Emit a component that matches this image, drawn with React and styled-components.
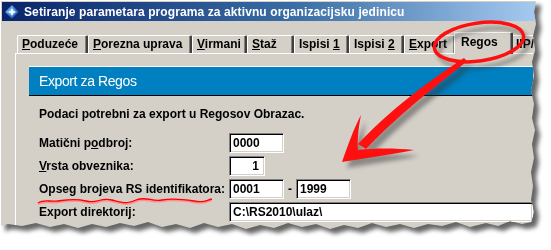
import React from "react";
import styled, { createGlobalStyle } from "styled-components";

const GlobalStyle = createGlobalStyle`
  html, body {
    margin: 0;
    padding: 0;
    background: #ffffff;
  }
`;

const Page = styled.div`
  position: relative;
  width: 551px;
  height: 250px;
  overflow: hidden;
  background: #ffffff;
  font-family: "Liberation Sans", Arial, sans-serif;
`;

const ShadowWrap = styled.div`
  filter: drop-shadow(5px 5px 2px rgba(0, 0, 0, 0.6));
`;

// torn paper edge on the right and bottom
const Dialog = styled.div`
  width: 537px;
  height: 232px;
  box-sizing: border-box;
  background: #d4d0c8;
  border-top: 1px solid #ffffff;
  border-left: 1px solid #ffffff;
  padding: 1px 0 0 1px;
  clip-path: polygon(
    0 0, 536px 0, 534px 12px, 536px 24px, 533px 36px, 535px 50px, 532px 62px,
    534px 76px, 531px 90px, 534px 104px, 532px 118px, 535px 130px, 532px 144px,
    534px 158px, 531px 172px, 533px 186px, 531px 200px, 534px 212px, 531px 222px,
    522px 224px, 510px 221px, 498px 226px, 486px 223px, 470px 227px, 456px 222px,
    442px 226px, 428px 224px, 414px 228px, 400px 224px, 386px 227px, 372px 223px,
    358px 228px, 344px 225px, 330px 229px, 316px 224px, 302px 227px, 288px 223px,
    274px 228px, 260px 225px, 246px 229px, 232px 224px, 218px 227px, 204px 223px,
    190px 228px, 176px 224px, 162px 227px, 148px 222px, 134px 226px, 120px 223px,
    106px 227px, 92px 224px, 78px 228px, 64px 224px, 50px 227px, 36px 223px,
    22px 226px, 8px 224px, 0 226px
  );
`;

const TitleBar = styled.div`
  height: 19px;
  display: flex;
  align-items: center;
  gap: 4px;
  padding-left: 2px;
  background: linear-gradient(to right, #0a246a 0%, #3a6ea5 55%, #a6caf0 100%);
`;

const TitleText = styled.span`
  color: #ffffff;
  font-weight: bold;
  font-size: 12px;
  letter-spacing: 0.1px;
  white-space: nowrap;
`;

const Body = styled.div`
  padding: 10px 4px 0 13px;
`;

const TabStrip = styled.div`
  display: flex;
  align-items: flex-end;
  height: 22px;
  padding-left: 2px;
`;

const Tab = styled.div`
  position: relative;
  z-index: ${(p) => (p.$active ? 2 : 1)};
  box-sizing: border-box;
  flex: none;
  width: ${(p) => p.$width}px;
  height: ${(p) => (p.$active ? 22 : 18)}px;
  margin: 0 ${(p) => (p.$active ? -2 : 0)}px ${(p) => (p.$active ? -1 : 0)}px;
  padding: ${(p) => (p.$active ? "2px 0 0 6px" : "1px 0 0 4px")};
  background: #d4d0c8;
  border-top: 1px solid #ffffff;
  border-left: 1px solid #ffffff;
  border-right: 2px solid #404040;
  border-top-left-radius: 2px;
  border-top-right-radius: 2px;
  box-shadow: inset -1px 0 0 #808080;
  font-size: 12px;
  font-weight: bold;
  color: #000000;
  white-space: nowrap;
  overflow: hidden;
  line-height: 15px;
`;

const Panel = styled.div`
  border-top: 1px solid #ffffff;
  border-left: 1px solid #ffffff;
  padding: 12px 0 0 13px;
  height: 200px;
`;

const Header = styled.div`
  height: 30px;
  box-sizing: border-box;
  display: flex;
  align-items: center;
  padding-left: 10px;
  background: #0080c0;
  border-top: 1px solid #ffffff;
  border-bottom: 1px solid #000000;
  color: #ffffff;
  font-size: 14px;
  letter-spacing: -0.4px;
`;

const Description = styled.div`
  margin: 11px 0 0 10px;
  height: 15px;
  font-size: 12px;
  font-weight: bold;
  line-height: 15px;
`;

const Form = styled.div`
  display: grid;
  grid-template-columns: 190px auto;
  grid-auto-rows: 21px;
  row-gap: 2px;
  align-items: center;
  margin: 10px 0 0 10px;
`;

const Label = styled.div`
  font-size: 12px;
  font-weight: bold;
  white-space: nowrap;
`;

const FieldRow = styled.div`
  display: flex;
  align-items: center;
  gap: 4px;
`;

const Field = styled.div`
  box-sizing: border-box;
  width: ${(p) => p.$width}px;
  height: 20px;
  padding: 0 ${(p) => (p.$right ? "5px" : "0")} 0 3px;
  display: flex;
  align-items: center;
  justify-content: ${(p) => (p.$right ? "flex-end" : "flex-start")};
  background: #ffffff;
  border-top: 1px solid #808080;
  border-left: 1px solid #808080;
  border-bottom: 1px solid #ffffff;
  border-right: 1px solid #ffffff;
  box-shadow: inset 1px 1px 0 #000000, inset -1px -1px 0 #d4d0c8;
  font-size: 12px;
  font-weight: bold;
  white-space: nowrap;
  overflow: hidden;
`;

const Dash = styled.span`
  font-size: 12px;
  font-weight: bold;
`;

const Overlay = styled.svg`
  position: absolute;
  left: 0;
  top: 0;
  pointer-events: none;
`;

const AppIcon = () => (
  <svg width="16" height="16" viewBox="0 0 16 16">
    <defs>
      <linearGradient id="ig" x1="0" y1="0" x2="1" y2="1">
        <stop offset="0" stopColor="#9fd4ff" />
        <stop offset="0.5" stopColor="#2f7fe0" />
        <stop offset="1" stopColor="#0a2f8a" />
      </linearGradient>
    </defs>
    <path d="M8 0.5 L15.5 8 L8 15.5 L0.5 8 Z" fill="url(#ig)" stroke="#0b1a4a" strokeWidth="1" />
    <circle cx="8" cy="8" r="3" fill="#cfeaff" opacity="0.6" />
    <path d="M8 3 L9 7 L13 8 L9 9 L8 13 L7 9 L3 8 L7 7 Z" fill="#ffffff" />
  </svg>
);

const tabs = [
  { key: "p", pre: "", u: "P", post: "oduzeće", w: 71 },
  { key: "pu", pre: "", u: "P", post: "orezna uprava", w: 104 },
  { key: "v", pre: "", u: "V", post: "irmani", w: 55 },
  { key: "s", pre: "", u: "S", post: "taž", w: 47 },
  { key: "i1", pre: "Ispisi ", u: "1", post: "", w: 55 },
  { key: "i2", pre: "Ispisi ", u: "2", post: "", w: 55 },
  { key: "e", pre: "", u: "E", post: "xport", w: 52 },
  { key: "r", pre: "Regos", u: "", post: "", w: 59, active: true },
  { key: "ip", pre: "IIP/S", u: "", post: "", w: 50 },
];

const wave =
  "M38 203 C44 199, 50 202, 58 201 S74 198, 86 201 S100 197, 112 200 S126 204, 136 200 S152 202, 162 200 S182 199, 194 201 S206 200, 212 199";

export default function App() {
  return (
    <>
      <GlobalStyle />
      <Page>
        <ShadowWrap>
          <Dialog>
            <TitleBar>
              <AppIcon />
              <TitleText>Setiranje parametara programa za aktivnu organizacijsku jedinicu</TitleText>
            </TitleBar>
            <Body>
              <TabStrip>
                {tabs.map((t) => (
                  <Tab key={t.key} $width={t.w} $active={t.active}>
                    {t.pre}
                    {t.u && <u>{t.u}</u>}
                    {t.post}
                  </Tab>
                ))}
              </TabStrip>
              <Panel>
                <Header>Export za Regos</Header>
                <Description>Podaci potrebni za export u Regosov Obrazac.</Description>
                <Form>
                  <Label>
                    Matični p<u>o</u>dbroj:
                  </Label>
                  <FieldRow>
                    <Field $width={55}>0000</Field>
                  </FieldRow>
                  <Label>
                    <u>V</u>rsta obveznika:
                  </Label>
                  <FieldRow>
                    <Field $width={36} $right>
                      1
                    </Field>
                  </FieldRow>
                  <Label>Opseg brojeva RS identifikatora:</Label>
                  <FieldRow>
                    <Field $width={55}>0001</Field>
                    <Dash>-</Dash>
                    <Field $width={55}>1999</Field>
                  </FieldRow>
                  <Label>Export direktorij:</Label>
                  <FieldRow>
                    <Field $width={304}>C:\RS2010\ulaz\</Field>
                  </FieldRow>
                </Form>
              </Panel>
            </Body>
          </Dialog>
        </ShadowWrap>

        <Overlay width="551" height="250" viewBox="0 0 551 250">
          <defs>
            <filter id="soft" x="-20%" y="-20%" width="140%" height="140%">
              <feGaussianBlur stdDeviation="2" />
            </filter>
          </defs>
          {/* shadows */}
          <g filter="url(#soft)" opacity="0.45" transform="translate(5 6)">
            <ellipse cx="479" cy="42" rx="45" ry="19" transform="rotate(-8 479 42)" fill="none" stroke="#303030" strokeWidth="3.5" />
            <path d="M464 58 C440 74, 400 100, 358 144 L366 149 C405 108, 445 80, 467 61 Z" fill="#303030" />
            <path d="M342 162 C347 148, 353 130, 361 115 C358 130, 357 143, 358 150 C375 148, 395 148, 414 150 C395 154, 366 158, 342 162 Z" fill="#303030" />
          </g>
          {/* ellipse round the tab */}
          <ellipse cx="479" cy="42" rx="45" ry="19" transform="rotate(-8 479 42)" fill="none" stroke="#ff1010" strokeWidth="3.5" />
          {/* arrow */}
          <path d="M464 58 C440 74, 400 100, 358 144 L366 149 C405 108, 445 80, 467 61 Z" fill="#ff1010" />
          <path d="M342 162 C347 148, 353 130, 361 115 C358 130, 357 143, 358 150 C375 148, 395 148, 414 150 C395 154, 366 158, 342 162 Z" fill="#ff1010" />
          {/* wavy underline */}
          <path d={wave} fill="none" stroke="#ff9090" strokeWidth="2.5" transform="translate(0 1)" />
          <path d={wave} fill="none" stroke="#ff0000" strokeWidth="1.3" />
        </Overlay>
      </Page>
    </>
  );
}
